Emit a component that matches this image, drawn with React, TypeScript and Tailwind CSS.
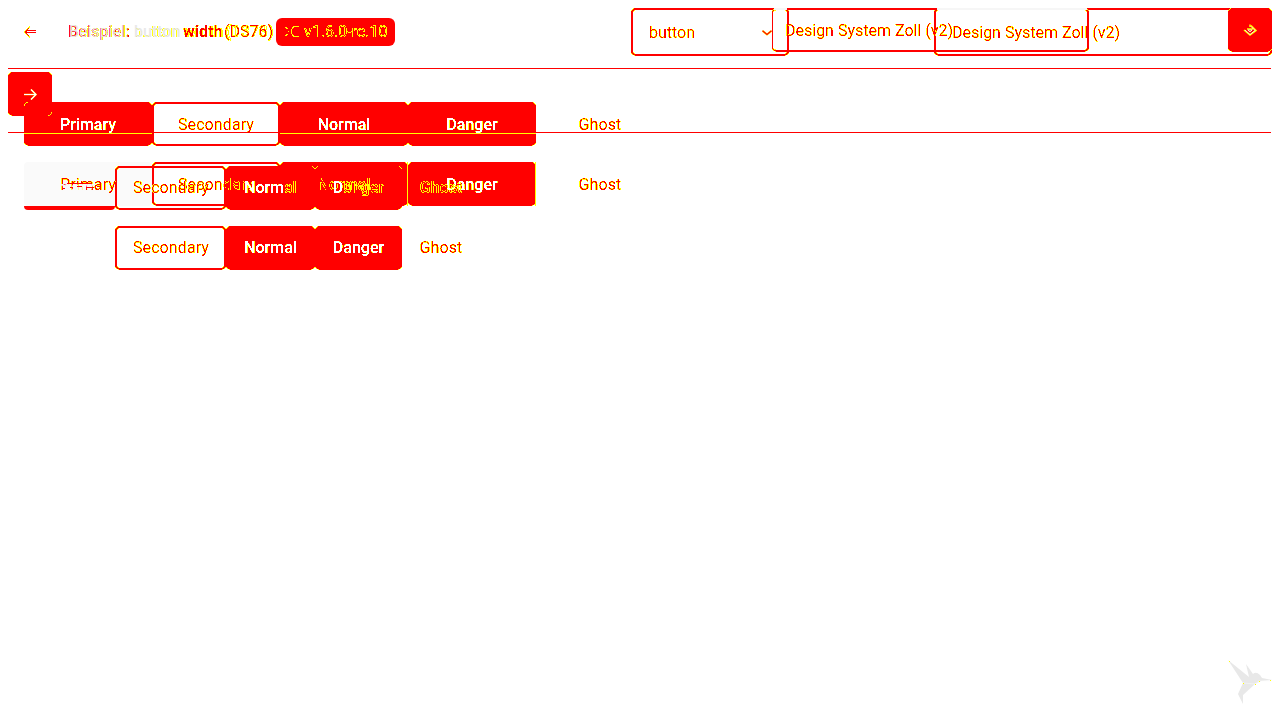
import React from "react";

const edge = "[filter:url(#edge-red)]";
const white = "font-medium [filter:url(#edge-white)]";
const contour = "font-medium [filter:url(#contour)]";

function Filters() {
  return (
    <svg className="absolute h-0 w-0" aria-hidden="true">
      <filter id="edge-red" x="-5%" y="-20%" width="110%" height="140%" colorInterpolationFilters="sRGB">
        <feColorMatrix values="0 0 0 0 1  0 0 0 1 0  0 0 0 0 0  0 0 0 1 0" />
        <feComponentTransfer>
          <feFuncG type="discrete" tableValues="1 1 1 1 1 1 1 0 0 0" />
          <feFuncA type="discrete" tableValues="0 0 1 1 1 1 1 1 1 1" />
        </feComponentTransfer>
      </filter>
      <filter id="edge-white" x="-5%" y="-20%" width="110%" height="140%" colorInterpolationFilters="sRGB">
        <feColorMatrix values="0 0 0 0 1  0 0 0 0 1  0 0 0 1 0  0 0 0 1 0" />
        <feComponentTransfer>
          <feFuncB type="discrete" tableValues="0 0 0 0 0 1 1 1 1 1" />
          <feFuncA type="discrete" tableValues="0 0 0 1 1 1 1 1 1 1" />
        </feComponentTransfer>
      </filter>
      <filter id="contour" x="-5%" y="-20%" width="110%" height="140%" colorInterpolationFilters="sRGB">
        <feColorMatrix values="0 0 0 0 1  0 0 0 0 1  0 0 0 0 0  0 0 0 1 0" />
        <feComponentTransfer>
          <feFuncA type="discrete" tableValues="0 1 1 1 1 1 1 1 1 0" />
        </feComponentTransfer>
      </filter>
    </svg>
  );
}

type Kind = "solid" | "outline" | "ghost" | "muted" | "contour" | "ghostContour";
type Item = { label: string; kind: Kind; width: string };

function Button({ label, kind, width, raised = false, pad = "pt-0.5" }: Item & { raised?: boolean; pad?: string }) {
  const layer = raised ? "z-10" : "";
  const tone =
    kind === "solid" ? white : kind === "contour" || kind === "ghostContour" ? contour : `${edge} tracking-[0.1px]`;
  return (
    <div className={`relative flex h-11 shrink-0 items-center justify-center text-base leading-6 ${width}`}>
      {(kind === "solid" || kind === "contour") && (
        <div className={`absolute inset-0 rounded-[5px] bg-[#ff0000] ${edge} ${layer}`} />
      )}
      {kind === "outline" && (
        <div className={`absolute inset-0 rounded-[5px] border-2 border-[#ff0000] ${edge} ${layer}`} />
      )}
      {kind === "muted" && <div className="absolute inset-0 rounded bg-[#fafafa]" />}
      <span className={`relative z-20 ${pad} ${tone}`}>{label}</span>
    </div>
  );
}

const wide: Item[] = [
  { label: "Primary", kind: "solid", width: "w-32" },
  { label: "Secondary", kind: "outline", width: "w-32" },
  { label: "Normal", kind: "solid", width: "w-32" },
  { label: "Danger", kind: "solid", width: "w-32" },
  { label: "Ghost", kind: "ghost", width: "w-32" },
];

const wideSecond: Item[] = [
  { label: "Primary", kind: "muted", width: "w-32" },
  { label: "Secondary", kind: "outline", width: "w-32" },
  { label: "Normal", kind: "contour", width: "w-32" },
  { label: "Danger", kind: "solid", width: "w-32" },
  { label: "Ghost", kind: "ghost", width: "w-32" },
];

const compact: Item[] = [
  { label: "Secondary", kind: "outline", width: "w-[111px]" },
  { label: "Normal", kind: "solid", width: "w-[89px]" },
  { label: "Danger", kind: "solid", width: "w-[87px]" },
  { label: "Ghost", kind: "ghost", width: "w-[78px]" },
];

function Title() {
  return (
    <div className="ml-8 flex h-6 w-[208px] whitespace-nowrap">
      <div className="grid w-[65px] shrink-0">
        <span className={`col-start-1 row-start-1 font-bold ${edge}`}>Beispiel:</span>
        <span className="relative col-start-1 row-start-1 pl-px text-[#e8e8e8]">Beispiel:</span>
      </div>
      <div className="grid w-[49px] shrink-0">
        <span className={`col-start-1 row-start-1 font-bold ${contour}`}>button</span>
        <span className="relative col-start-1 row-start-1 pl-px font-medium text-[#e8e8e8]">button</span>
      </div>
      <div className="grid w-[42px] shrink-0">
        <span className={`col-start-1 row-start-1 pl-0.5 ${contour}`}>width</span>
        <span className={`col-start-1 row-start-1 pl-px font-bold ${edge}`}>width</span>
      </div>
      <div className="grid shrink-0">
        <span className={`col-start-1 row-start-1 pl-0.5 ${contour}`}>(1373)</span>
        <span className={`col-start-1 row-start-1 ${edge}`}>(DS76)</span>
      </div>
    </div>
  );
}

function SelectBox({ label, width, children }: { label: string; width: string; children?: React.ReactNode }) {
  return (
    <div className={`relative flex h-12 items-center justify-between pt-px pr-[17px] pl-[18px] ${width}`}>
      <div className={`absolute inset-0 rounded-[5px] border-2 border-[#ff0000] ${edge}`} />
      <span className={edge}>{label}</span>
      {children}
    </div>
  );
}

export default function App() {
  return (
    <div className="relative h-[720px] w-[1280px] overflow-hidden bg-white px-2 font-['Roboto',sans-serif] text-[#ff0000]">
      <Filters />
      <header className="flex h-[68px] justify-between">
        <div className="flex h-16 items-center pl-4 text-base">
          <svg viewBox="0 0 12 12" className="h-3 w-3" fill="none" shapeRendering="crispEdges">
            <path d="M6 .5L.5 6L6 11.5" stroke="#ffff00" strokeWidth="1.5" />
            <path d="M5 2L1.5 6L5 10M3 4.5H12M3 6.5H12" stroke="#ff0000" />
          </svg>
          <Title />
          <div className="flex h-7 w-[119px] items-center rounded-md bg-[#ff0000] pl-[9px]">
            <svg viewBox="0 0 16 16" className="mr-[3px] h-4 w-4 shrink-0" fill="none" stroke="#ffff00" shapeRendering="crispEdges">
              <path d="M0 3L3 5M0 12L3 10M3 7.500H4M14 2.500H9L6 6V9L9 12.500H14" />
            </svg>
            <span className="[filter:url(#contour)]">v1.6.0-rc.10</span>
          </div>
        </div>
        <div className="relative mt-2 flex h-12 text-base">
          <SelectBox label="button" width="mr-[145px] w-[158px]">
            <svg viewBox="0 0 10 6" className="h-1.5 w-2.5" fill="none">
              <path d="M.5 .8L5 4.500L9.500 .8" stroke="#ffff00" strokeWidth="2" />
              <path d="M.5 .8L5 4.500L9.500 .8" stroke="#ff0000" strokeWidth="1.2" />
            </svg>
          </SelectBox>
          <SelectBox label="Design System Zoll (v2)" width="w-[338px]" />
          <div className="absolute top-0 right-[183px] flex h-11 w-[317px] items-center pt-0.5 pl-[13px]">
            <div className={`absolute inset-0 rounded-[5px] border-2 border-l border-[#ff0000] ${edge}`} />
            <span className={`relative whitespace-nowrap ${edge}`}>Design System Zoll (v2)</span>
            <div className="absolute inset-x-0 top-0 flex h-0.5 justify-between px-0.5">
              <div className="w-[13px] bg-[#f6f6f6]" />
              <div className="w-[150px] bg-[#f6f6f6]" />
            </div>
          </div>
          <div className="absolute top-0 right-0 flex h-11 w-11 items-center justify-center">
            <div className={`absolute inset-0 rounded-[5px] bg-[#ff0000] ${edge}`} />
            <svg viewBox="0 0 14 14" className="relative h-3.5 w-3.5" fill="none">
              <path d="M1 7L7 12L13 7.500L8 2.500M7 1.500V4M4 6H10" stroke="#ffff00" strokeWidth="1.500" />
              <path d="M2 7L7 11.500L12 7.500L8 3.500M5 7L7 9L9 7Z" stroke="#ffffff" strokeWidth=".8" />
            </svg>
          </div>
        </div>
      </header>
      <div className="h-px w-[1263px] bg-[#ff0000]" />

      <div className="absolute top-[72px] left-2 flex h-11 w-11 items-center justify-center">
        <div className={`absolute inset-0 rounded-[5px] bg-[#ff0000] ${edge}`} />
        <svg viewBox="0 0 14 14" className="relative h-3.5 w-3.5" fill="none">
          <path d="M1 7.500H13M8 2.500L13 7.500L8 12.500" stroke="#ffff00" strokeWidth="1.500" />
          <path d="M1 7.500H13M8 2.500L13 7.500L8 12.500" stroke="#ffffff" strokeWidth="1.100" />
        </svg>
      </div>

      <main className="pt-[33px] pl-4">
        <div className="relative">
          <div className="flex">
            {wide.map((b) => <Button key={b.label} {...b} />)}
          </div>
          <div className="absolute top-[30px] -left-4">
            <div className="h-px w-[1263px] bg-[#ff0000]" />
            <div className="flex h-px gap-32 pl-4">
              <div className="w-32 bg-[#ffff00]" />
              <div className="w-64 bg-[#ffff00]" />
            </div>
          </div>
          <svg viewBox="0 0 28 14" className="absolute top-0 left-0 h-3.5 w-7" fill="none">
            <path d="M.5 4V2.500L2.500 .5H4M24 13.500H25.500L27.500 11.500V10" stroke="#ffff00" />
          </svg>
        </div>

        <div className="relative mt-4">
          <div className="flex">
            {wideSecond.map((b) => <Button key={b.label} {...b} />)}
          </div>
          <div className="absolute inset-y-0 left-[383px] w-[129px] border-x border-[#ffff00]" />
          <div className="absolute top-full left-0 h-1 w-[91px] rounded-b bg-[#ff0000]" />
          <div className="absolute top-1 left-0 z-20 flex h-11">
            <div className="flex w-[91px] items-center justify-center leading-6 font-medium text-[#fafafa]">
              <span className="pr-2">Primary</span>
            </div>
          </div>
          <svg viewBox="0 0 42 7" className="absolute top-[20px] left-9 z-20 h-[7px] w-[42px]" shapeRendering="crispEdges">
            <path d="M8 1.500H31M3 6.500H5M10 5.500H13M17 4.500H22M26 5.500H34M37 4.500H41" stroke="#ff0000" />
          </svg>
          <div className="absolute top-1 left-[91px] flex">
            <Button label="Secondary" kind="outline" width="w-[111px]" raised pad="pl-px" />
            <div className="relative flex">
              <Button label="" kind="solid" width="w-[89px]" raised />
              <Button label="" kind="solid" width="w-[87px]" raised />
              <div className="absolute inset-0 z-20 flex items-center leading-6">
                <div className="flex w-[89px] justify-center">
                  <span className={white}>Norm</span>
                  <span className={contour}>al</span>
                </div>
                <div className="flex w-[87px] justify-center">
                  <span className={white}>D</span>
                  <span className={contour}>anger</span>
                </div>
              </div>
            </div>
            <Button label="Ghost" kind="ghostContour" width="w-[78px]" pad="" />
          </div>
        </div>

        <div className="mt-5 flex pl-[91px]">
          {compact.map((b) => <Button key={b.label} {...b} pad={b.kind === "outline" ? "pl-px" : ""} />)}
        </div>
      </main>

      <svg viewBox="0 0 44 44" className="absolute right-2 bottom-4 h-11 w-11" fill="#e8e8e8">
        <path d="M0 0L21 17L18 4L25 14Q28 11 32 15L34 18L44 20L33 21L27 24L15 35V44L10 34L15 23Z" />
        <path d="M15 23L27 24L31 21L44 21" stroke="#fafafa" strokeWidth=".5" fill="none" />
        <path d="M1 1h1v1h-1zM15 23h1v1h-1zM27 24h1v1h-1zM31 21h1v1h-1zM42 20h1v1h-1z" fill="#ffff00" />
      </svg>
    </div>
  );
}
